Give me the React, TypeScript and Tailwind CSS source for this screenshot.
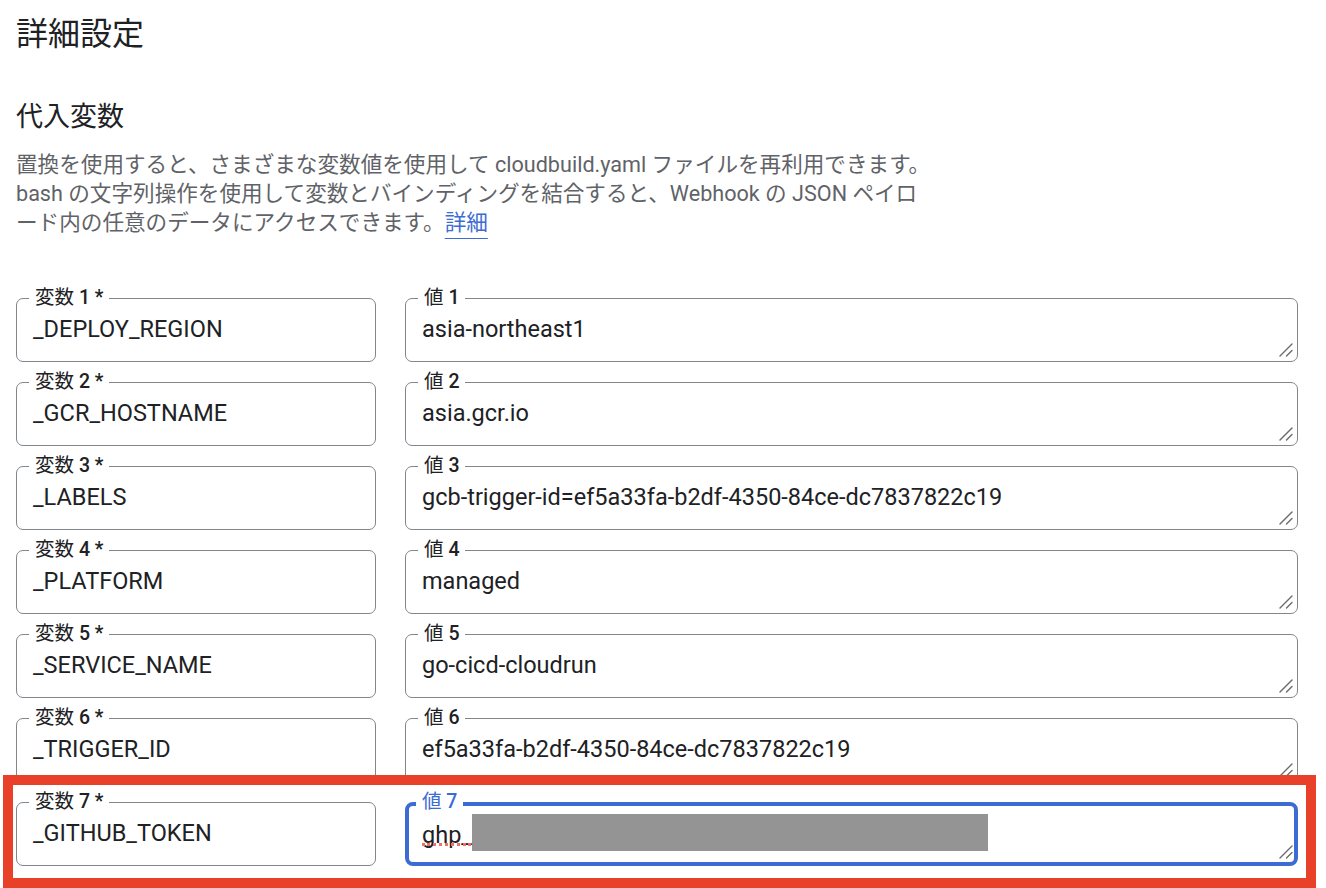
import React from 'react'

const rows = [
    { name: '_DEPLOY_REGION', value: 'asia-northeast1' },
    { name: '_GCR_HOSTNAME', value: 'asia.gcr.io' },
    { name: '_LABELS', value: 'gcb-trigger-id=ef5a33fa-b2df-4350-84ce-dc7837822c19' },
    { name: '_PLATFORM', value: 'managed' },
    { name: '_SERVICE_NAME', value: 'go-cicd-cloudrun' },
    { name: '_TRIGGER_ID', value: 'ef5a33fa-b2df-4350-84ce-dc7837822c19' },
    { name: '_GITHUB_TOKEN', value: 'ghp_' },
]

const ResizeHandle = ({ className }: { className: string }) => (
    <svg className={className} width="14" height="14" viewBox="0 0 14 14" fill="none">
        <path d="M1 13L13 1" stroke="#6b6b6b" strokeWidth="1.4" strokeLinecap="round" />
        <path d="M7.5 13L13 7.5" stroke="#6b6b6b" strokeWidth="1.4" strokeLinecap="round" />
    </svg>
)

export default function App() {
    return (
        <div className="relative w-[1326px] h-[888px] overflow-hidden bg-white pl-[16px] pt-[14px] font-[Roboto,'Noto_Sans_CJK_JP',sans-serif] text-[#202124]">
            <h1 className="text-[32px] leading-[40px] font-normal">詳細設定</h1>
            <h2 className="mt-[45px] text-[27px] leading-[36px] font-normal">代入変数</h2>

            <p className="mt-[15px] text-[21.6px] leading-[29px] text-[#5f6368] whitespace-nowrap">
                置換を使用すると、さまざまな変数値を使用して cloudbuild.yaml ファイルを再利用できます。<br />
                bash の文字列操作を使用して変数とバインディングを結合すると、Webhook の JSON ペイロ<br />
                ード内の任意のデータにアクセスできます。
                <span className="text-[#3d6bd4] underline decoration-1 underline-offset-[8px]">詳細</span>
            </p>

            {/* Variables */}
            <div className="mt-[61px] flex flex-col gap-[20px]">
                {rows.map((row, index) => {
                    const focused = index === rows.length - 1
                    return (
                        <div key={index} className="flex gap-[29px]">
                            <div className="relative w-[360px] h-[64px] rounded-[7px] border border-[#80868b] flex items-center pl-[16px]">
                                <span className="absolute left-[12px] -top-[12px] bg-white px-[6px] text-[19.5px] leading-[22px] text-[#202124]">
                                    変数<span className="font-medium"> {index + 1} *</span>
                                </span>
                                <span className="text-[23.5px]">{row.name}</span>
                            </div>

                            {focused ? (
                                <div className="relative w-[893px] h-[64px] rounded-[8px] border-[4px] border-[#3d6bd4] flex items-center pl-[13px]">
                                    <span className="absolute left-[7px] -top-[15px] bg-white px-[6px] text-[19.5px] leading-[22px] text-[#3d6bd4]">
                                        値<span className="font-medium"> 7</span>
                                    </span>
                                    <span className="text-[23.5px] whitespace-nowrap">
                                        <span className="relative">
                                            ghp_
                                            {/* spellcheck dots */}
                                            <span className="absolute left-0 right-[1px] bottom-[3px] h-0 border-b-[3px] border-dotted border-[#ec7064]"></span>
                                        </span>
                                        <span className="inline-block w-[516px] h-[37px] bg-[#949494] align-[-8px]"></span>
                                    </span>
                                    <ResizeHandle className="absolute right-[1px] bottom-[3px]" />
                                </div>
                            ) : (
                                <div className="relative w-[893px] h-[64px] rounded-[7px] border border-[#80868b] flex items-center pl-[16px]">
                                    <span className="absolute left-[12px] -top-[12px] bg-white px-[6px] text-[19.5px] leading-[22px] text-[#202124]">
                                        値<span className="font-medium"> {index + 1}</span>
                                    </span>
                                    <span className="text-[23.5px]">{row.value}</span>
                                    <ResizeHandle className="absolute right-[4px] bottom-[4px]" />
                                </div>
                            )}
                        </div>
                    )
                })}
            </div>

            {/* Highlight */}
            <div className="absolute left-[3px] top-[775px] w-[1313px] h-[113px] border-[10px] border-[#e9402a] pointer-events-none"></div>
        </div>
    )
}
